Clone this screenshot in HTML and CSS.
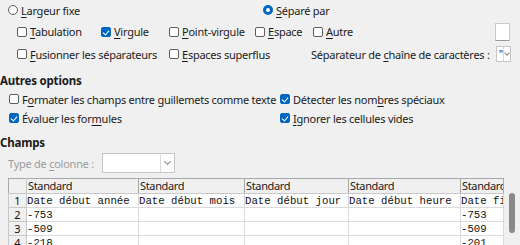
FILE: index.html
```html
<!DOCTYPE html>
<html lang="fr">
<head>
  <meta charset="UTF-8">
  <title>Import de texte</title>
  <link rel="stylesheet" href="styles.css">
</head>
<body>
  <div class="row r1">
    <label class="opt w-fixe"><span class="rb"></span><span><u>L</u>argeur fixe</span></label>
    <label class="opt"><span class="rb on"></span><span><u>S</u>éparé par</span></label>
  </div>

  <div class="row r2">
    <label class="opt w-tab"><span class="cb"></span><span><u>T</u>abulation</span></label>
    <label class="opt w-virg"><span class="cb on"></span><span><u>V</u>irgule</span></label>
    <label class="opt w-pv"><span class="cb"></span><span><u>P</u>oint-virgule</span></label>
    <label class="opt w-esp"><span class="cb"></span><span><u>E</u>space</span></label>
    <label class="opt grow"><span class="cb"></span><span><u>A</u>utre</span></label>
    <span class="txt"></span>
  </div>

  <div class="row r3">
    <label class="opt w-fus"><span class="cb"></span><span><u>F</u>usionner les séparateurs</span></label>
    <label class="opt w-sup"><span class="cb"></span><span><u>E</u>spaces superflus</span></label>
    <span class="lbl grow">Séparateur de <u>c</u>haîne de caractères :</span>
    <span class="combo small"><span class="val">"</span><span class="arrow"></span></span>
  </div>

  <h3 class="head h-autres">Autres options</h3>

  <div class="row r4">
    <label class="opt w-form"><span class="cb"></span><span>F<u>o</u>rmater les champs entre guillemets comme texte</span></label>
    <label class="opt"><span class="cb on"></span><span>Détecter les nom<u>b</u>res spéciaux</span></label>
  </div>

  <div class="row r5">
    <label class="opt w-form"><span class="cb on"></span><span>Évaluer les for<u>m</u>ules</span></label>
    <label class="opt"><span class="cb on"></span><span><u>I</u>gnorer les cellules vides</span></label>
  </div>

  <h3 class="head h-champs">Champs</h3>

  <div class="row r6">
    <span class="lbl dim">Type de <u>c</u>olonne :</span>
    <span class="combo wide"><span class="val"></span><span class="arrow"></span></span>
  </div>

  <div class="grid-wrap">
    <table class="grid">
      <colgroup>
        <col class="c0"><col class="c1"><col class="c2"><col class="c3"><col class="c4"><col class="c5">
      </colgroup>
      <thead>
        <tr><th></th><th>Standard</th><th>Standard</th><th>Standard</th><th>Standard</th><th>Standard</th></tr>
      </thead>
      <tbody>
        <tr><td class="num">1</td><td>Date début année</td><td>Date début mois</td><td>Date début jour</td><td>Date début heure</td><td>Date fin année</td></tr>
        <tr><td class="num">2</td><td>-753</td><td></td><td></td><td></td><td>-753</td></tr>
        <tr><td class="num">3</td><td>-509</td><td></td><td></td><td></td><td>-509</td></tr>
        <tr><td class="num">4</td><td>-218</td><td></td><td></td><td></td><td>-201</td></tr>
      </tbody>
    </table>
    <div class="vscroll"><div class="thumb"></div></div>
  </div>
</body>
</html>
```

FILE: styles.css
```css
body { margin: 0; width: 520px; height: 245px; overflow: hidden; background: #f0f0f0; color: #1b1b1b; font-family: "Noto Sans", sans-serif; font-size: 11px; letter-spacing: -0.25px; }
u { text-decoration-thickness: 1px; text-underline-offset: 2px; }

.row { display: flex; align-items: center; white-space: nowrap; }
.r1 { height: 20px; padding-left: 8px; }
.r2 { height: 23px; padding-left: 17px; }
.r3 { height: 22px; padding-left: 17px; }
.r4 { height: 16px; padding-left: 9px; }
.r5 { height: 22px; padding-left: 9px; }
.r6 { height: 20px; padding-left: 8px; }

.opt { display: flex; align-items: center; gap: 3px; }
.grow { flex: 1; }
.w-fixe { width: 255px; }
.w-tab { width: 84px; }
.w-virg { width: 68px; }
.w-pv { width: 86px; }
.w-esp { width: 58px; }
.w-fus { width: 152px; }
.w-sup { width: 142px; }
.w-form { width: 271px; }

.head { margin: 6px 0 0; height: 20px; line-height: 20px; font-size: 11.5px; font-weight: bold; letter-spacing: -0.2px; }
.h-champs { margin-top: 4px; }

/* cases et boutons radio */
.cb, .rb { flex: none; box-sizing: border-box; width: 10px; height: 10px; border: 1px solid #5d5d5d; background: #fff; }
.cb { border-radius: 2px; position: relative; }
.cb.on { background: #0067c0; border-color: #0067c0; }
.cb.on::after { content: ""; position: absolute; left: 2px; top: 1px; width: 3px; height: 5px; border: solid #fff; border-width: 0 1px 1px 0; transform: rotate(40deg); }
.rb { border-radius: 50%; }
.rb.on { border: 3px solid #0067c0; }

.lbl.dim { width: 94px; color: #9c9c9c; }

.txt { box-sizing: border-box; width: 15px; height: 18px; margin-right: 10px; background: #fff; border: 1px solid #c9c9c9; border-bottom-color: #9a9a9a; }

.combo { box-sizing: border-box; display: flex; height: 20px; background: #fff; border: 1px solid #c5c5c5; }
.combo .val { flex: 1; padding-left: 2px; font-size: 10px; line-height: 14px; }
.combo .arrow { width: 13px; border-left: 1px solid #dcdcdc; position: relative; }
.combo .arrow::after { content: ""; position: absolute; left: 4px; top: 5px; width: 4px; height: 4px; border: solid #8a8a8a; border-width: 0 1px 1px 0; transform: rotate(45deg); }
.combo.small { width: 15px; height: 16px; margin-right: 9px; }
.combo.small .arrow { width: 8px; }
.combo.small .arrow::after { left: 1px; top: 4px; width: 3px; height: 3px; }
.combo.wide { width: 73px; }

/* tableau d'aperçu */
.grid-wrap { display: flex; margin: 5px 0 0 8px; }
.grid { table-layout: fixed; width: 495px; border-collapse: collapse; background: #fff; }
.c0 { width: 18px; }
.c1 { width: 112px; }
.c2 { width: 106px; }
.c3 { width: 104px; }
.c4 { width: 112px; }
.c5 { width: 43px; }
.grid th, .grid td { overflow: hidden; white-space: nowrap; padding: 0; }
.grid th { height: 14px; background: #f0f0f0; border: 1px solid #a8a8a8; border-bottom-color: #c8c8c8; text-align: left; font-weight: normal; font-size: 11px; letter-spacing: -0.35px; line-height: 14px; padding-left: 1px; }
.grid td { height: 12px; border: 1px solid #dadada; font-family: "Liberation Mono", monospace; font-size: 10.7px; letter-spacing: 0; line-height: 12px; color: #111; }
.grid td.num { background: #f0f0f0; border-color: #c8c8c8; text-align: center; font-family: "Noto Sans", sans-serif; font-size: 11px; line-height: 12px; padding-top: 1px; }
.grid th:first-child { border-right-color: #c8c8c8; }

.vscroll { width: 15px; padding: 15px 0 0 5px; box-sizing: border-box; }
.thumb { width: 6px; height: 40px; background: #8a8a8a; border-radius: 3px; }
```
